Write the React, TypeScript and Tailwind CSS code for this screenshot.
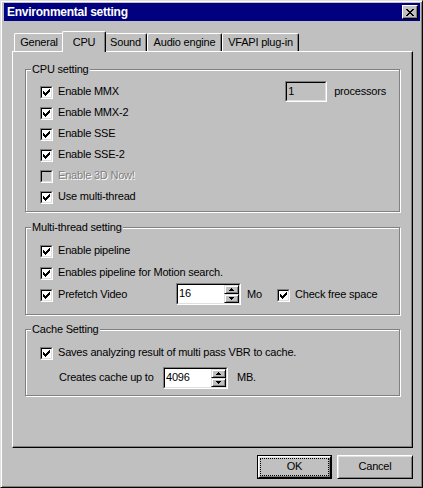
import React from "react";

function CheckMark() {
  return (
    <svg width="7" height="7" viewBox="0 0 7 7" className="block" shapeRendering="crispEdges">
      <rect x="6" y="0" width="1" height="1" fill="#000" />
      <rect x="5" y="1" width="2" height="1" fill="#000" />
      <rect x="0" y="2" width="1" height="1" fill="#000" />
      <rect x="4" y="2" width="3" height="1" fill="#000" />
      <rect x="0" y="3" width="2" height="1" fill="#000" />
      <rect x="3" y="3" width="3" height="1" fill="#000" />
      <rect x="0" y="4" width="5" height="1" fill="#000" />
      <rect x="1" y="5" width="3" height="1" fill="#000" />
      <rect x="2" y="6" width="1" height="1" fill="#000" />
    </svg>
  );
}

function Check({ checked = true, disabled = false }: { checked?: boolean; disabled?: boolean }) {
  return (
    <span className="block w-[13px] h-[13px] shrink-0 border border-t-[#808080] border-l-[#808080] border-r-white border-b-white">
      <span
        className={
          disabled
            ? "block w-full h-full border border-t-black border-l-black border-r-[#dfdfdf] border-b-[#dfdfdf] bg-[#c0c0c0] p-[1px]"
            : "block w-full h-full border border-t-black border-l-black border-r-[#dfdfdf] border-b-[#dfdfdf] bg-white p-[1px]"
        }
      >
        {checked && <CheckMark />}
      </span>
    </span>
  );
}

function CheckRow({ label, disabled = false, checked = true }: { label: string; disabled?: boolean; checked?: boolean }) {
  return (
    <div className="flex items-center h-[21px]">
      <Check checked={checked} disabled={disabled} />
      <span
        className={
          disabled
            ? "ml-[5px] pb-[2px] text-[#808080] [text-shadow:1px_1px_0_#fff] whitespace-nowrap"
            : "ml-[5px] pb-[2px] whitespace-nowrap"
        }
      >
        {label}
      </span>
    </div>
  );
}

function Arrow({ up }: { up?: boolean }) {
  return (
    <svg width="5" height="3" viewBox="0 0 5 3" className="block" shapeRendering="crispEdges">
      {up ? (
        <>
          <rect x="2" y="0" width="1" height="1" fill="#000" />
          <rect x="1" y="1" width="3" height="1" fill="#000" />
          <rect x="0" y="2" width="5" height="1" fill="#000" />
        </>
      ) : (
        <>
          <rect x="0" y="0" width="5" height="1" fill="#000" />
          <rect x="1" y="1" width="3" height="1" fill="#000" />
          <rect x="2" y="2" width="1" height="1" fill="#000" />
        </>
      )}
    </svg>
  );
}

function SpinBtn({ up }: { up?: boolean }) {
  return (
    <div className="h-[9px] bg-[#c0c0c0] border border-t-[#dfdfdf] border-l-[#dfdfdf] border-r-black border-b-black shadow-[inset_1px_1px_0_#fff,inset_-1px_-1px_0_#808080] flex items-center justify-center">
      <Arrow up={up} />
    </div>
  );
}

function Spin({ value }: { value: string }) {
  return (
    <div className="w-[65px] h-[22px] shrink-0 border border-t-[#808080] border-l-[#808080] border-r-white border-b-white">
      <div className="w-full h-full flex border border-t-black border-l-black border-r-[#dfdfdf] border-b-[#dfdfdf] bg-white">
        <span className="flex-1 pl-[1px] leading-[16px]">{value}</span>
        <div className="w-[15px] flex flex-col">
          <SpinBtn up />
          <SpinBtn />
        </div>
      </div>
    </div>
  );
}

function Group({ title, className, children }: { title: string; className: string; children: React.ReactNode }) {
  return (
    <div className={"relative border border-[#808080] shadow-[inset_1px_1px_0_#fff,1px_1px_0_#fff] " + className}>
      <span className="absolute left-[5px] -top-[7px] px-[1px] bg-[#c0c0c0] leading-[13px] whitespace-nowrap">{title}</span>
      {children}
    </div>
  );
}

function Tab({ label, w }: { label: string; w: string }) {
  return (
    <div
      className={
        "h-[18px] flex items-center justify-center border-l border-t border-r border-l-white border-t-white border-r-black rounded-tl-[2px] rounded-tr-[2px] shadow-[inset_-1px_0_0_#808080] pb-[1px] whitespace-nowrap " +
        w
      }
    >
      {label}
    </div>
  );
}

export default function App() {
  return (
    <div className="w-[423px] h-[488px] bg-[#c0c0c0] text-[11px] tracking-[-0.2px] text-black font-['Liberation_Sans',Arial,sans-serif]">
      <div className="w-full h-full flex flex-col border border-t-[#dfdfdf] border-l-[#dfdfdf] border-r-black border-b-black shadow-[inset_1px_1px_0_#fff,inset_-1px_-1px_0_#808080] pl-[3px] pt-[2px] pr-[2px]">
        {/* Title bar */}
        <div className="h-[18px] shrink-0 bg-[#000080] flex items-center justify-between pl-[3px] pr-[2px]">
          <span className="text-white font-bold text-[12px] tracking-[-0.25px] leading-none pb-[1px]">Environmental setting</span>
          <div className="w-[16px] h-[14px] bg-[#c0c0c0] border border-t-white border-l-white border-r-black border-b-black shadow-[inset_-1px_-1px_0_#808080] flex items-center justify-center pr-[1px]">
            <svg width="8" height="7" viewBox="0 0 8 7" className="block" shapeRendering="crispEdges">
              <rect x="0" y="0" width="2" height="1" fill="#000" />
              <rect x="6" y="0" width="2" height="1" fill="#000" />
              <rect x="1" y="1" width="2" height="1" fill="#000" />
              <rect x="5" y="1" width="2" height="1" fill="#000" />
              <rect x="2" y="2" width="4" height="1" fill="#000" />
              <rect x="3" y="3" width="2" height="1" fill="#000" />
              <rect x="2" y="4" width="4" height="1" fill="#000" />
              <rect x="1" y="5" width="2" height="1" fill="#000" />
              <rect x="5" y="5" width="2" height="1" fill="#000" />
              <rect x="0" y="6" width="2" height="1" fill="#000" />
              <rect x="6" y="6" width="2" height="1" fill="#000" />
            </svg>
          </div>
        </div>

        {/* Tabs + panel */}
        <div className="ml-[8px] mr-[7px] mt-[10px]">
          <div className="flex items-end h-[20px] pl-[2px]">
            <Tab label="General" w="w-[50px]" />
            <div className="relative z-10 w-[44px] h-[21px] -mx-[2px] -mb-[1px] bg-[#c0c0c0] flex items-start justify-center pt-[2px] border-l border-t border-r border-l-white border-t-white border-r-black rounded-tl-[2px] rounded-tr-[2px] shadow-[inset_-1px_0_0_#808080]">
              CPU
            </div>
            <Tab label="Sound" w="w-[43px]" />
            <Tab label="Audio engine" w="w-[75px]" />
            <Tab label="VFAPI plug-in" w="w-[77px]" />
          </div>
          <div className="h-[397px] border border-t-white border-l-white border-r-black border-b-black shadow-[inset_-1px_-1px_0_#808080] pt-[17px] pl-[12px] pr-[12px] flex flex-col">
            <Group title="CPU setting" className="h-[143px] pt-[12px] pl-[14px] pr-[13px]">
              <div className="flex items-center h-[21px]">
                <CheckRow label="Enable MMX" />
                <div className="ml-auto -mt-[2px] w-[42px] h-[21px] border border-t-[#808080] border-l-[#808080] border-r-white border-b-white">
                  <div className="w-full h-full border border-t-black border-l-black border-r-[#dfdfdf] border-b-[#dfdfdf] bg-[#c0c0c0] pl-[1px] leading-[16px]">
                    1
                  </div>
                </div>
                <span className="ml-[7px] pb-[2px]">processors</span>
              </div>
              <CheckRow label="Enable MMX-2" />
              <CheckRow label="Enable SSE" />
              <CheckRow label="Enable SSE-2" />
              <CheckRow label="Enable 3D Now!" disabled checked={false} />
              <CheckRow label="Use multi-thread" />
            </Group>

            <Group title="Multi-thread setting" className="mt-[15px] h-[88px] pt-[13px] pl-[14px] flex flex-col gap-[1px]">
              <CheckRow label="Enable pipeline" />
              <CheckRow label="Enables pipeline for Motion search." />
              <div className="flex items-center h-[21px]">
                <div className="w-[136px]">
                  <CheckRow label="Prefetch Video" />
                </div>
                <div className="-mt-[3px]">
                  <Spin value="16" />
                </div>
                <span className="ml-[6px] w-[30px] pb-[2px]">Mo</span>
                <CheckRow label="Check free space" />
              </div>
            </Group>

            <Group title="Cache Setting" className="mt-[14px] h-[67px] pt-[13px] pl-[14px]">
              <CheckRow label="Saves analyzing result of multi pass VBR to cache." />
              <div className="flex items-center h-[24px] mt-[2px] pl-[19px]">
                <span className="w-[104px] pb-[2px] whitespace-nowrap">Creates cache up to</span>
                <Spin value="4096" />
                <span className="ml-[9px] pb-[2px]">MB.</span>
              </div>
            </Group>
          </div>
        </div>

        {/* Buttons */}
        <div className="flex justify-end gap-[5px] mt-[7px] mr-[7px]">
          <div className="w-[75px] h-[24px] border border-black">
            <div className="w-full h-full border border-t-white border-l-white border-r-black border-b-black shadow-[inset_1px_1px_0_#dfdfdf,inset_-1px_-1px_0_#808080] p-[1px] flex">
              <div className="flex-1 border border-dotted border-black flex items-center justify-center pb-[1px]">OK</div>
            </div>
          </div>
          <div className="w-[76px] h-[24px] border border-t-white border-l-white border-r-black border-b-black shadow-[inset_1px_1px_0_#dfdfdf,inset_-1px_-1px_0_#808080] flex items-center justify-center pb-[1px]">
            Cancel
          </div>
        </div>
      </div>
    </div>
  );
}
